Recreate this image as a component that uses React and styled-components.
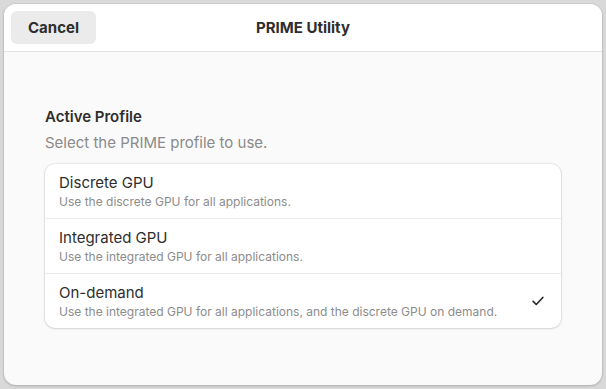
import React from "react";
import styled, { createGlobalStyle } from "styled-components";

const GlobalStyle = createGlobalStyle`
  html, body {
    margin: 0;
    padding: 0;
    background: #d9d9d9;
    font-family: Inter, "Noto Sans", sans-serif;
  }
`;

const profiles = [
  { title: "Discrete GPU", text: "Use the discrete GPU for all applications." },
  { title: "Integrated GPU", text: "Use the integrated GPU for all applications." },
  {
    title: "On-demand",
    text: "Use the integrated GPU for all applications, and the discrete GPU on demand.",
    active: true,
  },
];

export default function App() {
  return (
    <>
      <GlobalStyle />
      <Desktop>
        <Window>
          <HeaderBar>
            <CancelButton>Cancel</CancelButton>
            <Title>PRIME Utility</Title>
          </HeaderBar>
          <Content>
            <GroupTitle>Active Profile</GroupTitle>
            <GroupDescription>Select the PRIME profile to use.</GroupDescription>
            <List>
              {profiles.map((p) => (
                <Row key={p.title}>
                  <RowText>
                    <RowTitle>{p.title}</RowTitle>
                    <RowSubtitle>{p.text}</RowSubtitle>
                  </RowText>
                  {p.active && (
                    <Check viewBox="0 0 16 16">
                      <path
                        d="M2.5 8.5 L6 12 L13.5 4"
                        fill="none"
                        stroke="#2e2e2e"
                        strokeWidth="2"
                        strokeLinecap="round"
                        strokeLinejoin="round"
                      />
                    </Check>
                  )}
                </Row>
              ))}
            </List>
          </Content>
        </Window>
      </Desktop>
    </>
  );
}

const Desktop = styled.div`
  width: 606px;
  height: 389px;
  padding: 4px;
  box-sizing: border-box;
`;

const Window = styled.div`
  width: 598px;
  height: 381px;
  border-radius: 12px;
  background: #fafafa;
  overflow: hidden;
  box-shadow: 0 1px 3px rgba(0, 0, 0, 0.18), 0 0 0 1px rgba(0, 0, 0, 0.04);
  display: flex;
  flex-direction: column;
`;

const HeaderBar = styled.div`
  position: relative;
  height: 47px;
  background: #ffffff;
  border-bottom: 1px solid #e3e3e3;
  display: flex;
  align-items: center;
  justify-content: center;
  flex-shrink: 0;
`;

const CancelButton = styled.button`
  position: absolute;
  left: 7px;
  top: 7px;
  width: 85px;
  height: 33px;
  border: none;
  border-radius: 6px;
  background: #ebebeb;
  color: #2e2e2e;
  font-family: Inter, "Noto Sans", sans-serif;
  font-size: 15px;
  font-weight: 700;
`;

const Title = styled.div`
  font-size: 15px;
  font-weight: 700;
  color: #2e2e2e;
`;

const Content = styled.div`
  padding: 55px 41px 0;
  display: flex;
  flex-direction: column;
`;

const GroupTitle = styled.div`
  font-size: 15px;
  font-weight: 600;
  color: #2e2e2e;
  line-height: 20px;
`;

const GroupDescription = styled.div`
  font-size: 15px;
  color: #8a8a8a;
  line-height: 20px;
  margin-top: 6px;
`;

const List = styled.div`
  margin-top: 11px;
  background: #ffffff;
  border-radius: 10px;
  box-shadow: 0 0 0 1px rgba(0, 0, 0, 0.06), 0 1px 3px rgba(0, 0, 0, 0.1);
  display: flex;
  flex-direction: column;
`;

const Row = styled.div`
  height: 54px;
  padding: 0 14px;
  display: flex;
  align-items: center;
  & + & {
    border-top: 1px solid #ebebeb;
  }
`;

const RowText = styled.div`
  flex: 1;
  display: flex;
  flex-direction: column;
  gap: 2px;
`;

const RowTitle = styled.div`
  font-size: 15px;
  color: #2e2e2e;
  line-height: 18px;
`;

const RowSubtitle = styled.div`
  font-size: 12px;
  color: #8c8c8c;
  line-height: 15px;
`;

const Check = styled.svg`
  width: 14px;
  height: 14px;
  margin-right: 2px;
`;
